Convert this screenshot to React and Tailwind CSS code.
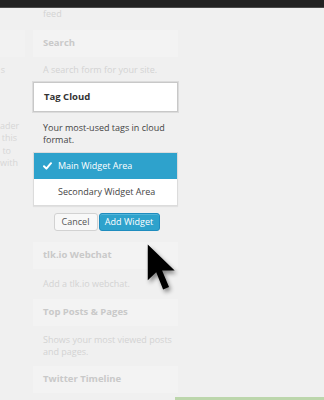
import React from "react";

function FadedBox({ title }) {
  return (
    <div className="h-[27px] bg-[#f3f3f3] flex items-center pl-[10px] text-[9.5px] font-bold text-[#c9c9c9] whitespace-nowrap">
      {title}
    </div>
  );
}

export default function App() {
  return (
    <div className="relative w-[324px] h-[400px] overflow-hidden bg-[#f0f0f0] font-['Open_Sans',sans-serif] flex flex-col">
      <div className="h-[8px] bg-[#222222] border-b border-[#4a4a4a] shrink-0" />
      <div className="flex flex-1 min-h-0">
        {/* left faded column */}
        <div className="w-[33px] shrink-0 flex flex-col text-[9px] text-[#d6d6d6]">
          <div className="mt-[22px] h-[27px] w-[25px] bg-[#f2f2f2]" />
          <div className="mt-[7px] w-[5px] text-right whitespace-nowrap leading-[12px]">s</div>
          <div className="mt-[44px] flex flex-col">
            <div className="w-[16px] text-right whitespace-nowrap leading-[12px]">ader</div>
            <div className="w-[17px] text-right whitespace-nowrap leading-[12px]">this</div>
            <div className="w-[11px] text-right whitespace-nowrap leading-[12px] mt-[1px]">to</div>
            <div className="w-[14px] text-right whitespace-nowrap leading-[12px]">with</div>
          </div>
        </div>
        {/* widgets column */}
        <div className="w-[145px] shrink-0 flex flex-col">
          <div className="pl-[10px] text-[9px] leading-[11px] text-[#d3d3d3]">feed</div>
          <div className="mt-[11px]"><FadedBox title="Search" /></div>
          <div className="mt-[7px] pl-[10px] text-[9px] leading-[12px] text-[#d3d3d3] whitespace-nowrap">A search form for your site.</div>
          <div className="mt-[6px] h-[30px] bg-white border border-[#c8c8c8] shadow-[0_0_0_1px_#dcdcdc] flex items-center pl-[10px] text-[9.5px] font-bold text-[#333]">
            Tag Cloud
          </div>
          <div className="mt-[10px] pl-[10px] pr-[6px] text-[9px] leading-[12px] text-[#444]">
            Your most-used tags in cloud<br />format.
          </div>
          <div className="mt-[6px] bg-white border border-[#dcdcdc] shadow-[0_1px_1px_rgba(0,0,0,0.06)] flex flex-col">
            <div className="h-[26px] bg-[#2ea2cc] flex items-center pl-[9px] text-white text-[9px]">
              <svg width="9" height="8" viewBox="0 0 9 8" className="mr-[6px]">
                <path d="M1 4.2 L3.4 6.6 L8 1.2" fill="none" stroke="white" strokeWidth="2" strokeLinecap="round" strokeLinejoin="round" />
              </svg>
              Main Widget Area
            </div>
            <div className="h-[26px] flex items-center pl-[24px] text-[9px] text-[#444]">
              Secondary Widget Area
            </div>
          </div>
          <div className="mt-[7px] flex justify-center gap-[1px] pl-[2px]">
            <div className="h-[18px] w-[44px] rounded-[3px] border border-[#d2d2d2] bg-[#f8f8f8] flex items-center justify-center text-[9px] text-[#555]">
              Cancel
            </div>
            <div className="h-[18px] w-[61px] rounded-[3px] border border-[#1e8cbe] bg-[#2ea2cc] flex items-center justify-center text-[9px] text-white shadow-[inset_0_1px_0_rgba(120,200,230,0.5)]">
              Add Widget
            </div>
          </div>
          <div className="mt-[11px]"><FadedBox title="tlk.io Webchat" /></div>
          <div className="mt-[9px] pl-[10px] text-[9px] leading-[12px] text-[#d3d3d3] whitespace-nowrap">Add a tlk.io webchat.</div>
          <div className="mt-[9px]"><FadedBox title="Top Posts & Pages" /></div>
          <div className="mt-[8px] pl-[10px] text-[9px] leading-[12px] text-[#d3d3d3] whitespace-nowrap">Shows your most viewed posts<br />and pages.</div>
          <div className="mt-[8px]"><FadedBox title="Twitter Timeline" /></div>
        </div>
        {/* right empty area */}
        <div className="flex-1 flex flex-col justify-end">
          <div className="h-[3px] ml-[-3px] bg-[#bcd6ac]" />
        </div>
      </div>
      {/* mouse cursor */}
      <svg
        className="absolute left-[147px] top-[244px] drop-shadow-[2px_3px_2px_rgba(0,0,0,0.45)]"
        width="32"
        height="52"
        viewBox="0 0 12.5 20"
      >
        <path d="M0.3 0 L0.3 14 L3.6 10.9 L6.3 17.6 L8.6 16.6 L5.9 10.2 L10.8 10.2 Z" fill="#000" />
      </svg>
    </div>
  );
}
